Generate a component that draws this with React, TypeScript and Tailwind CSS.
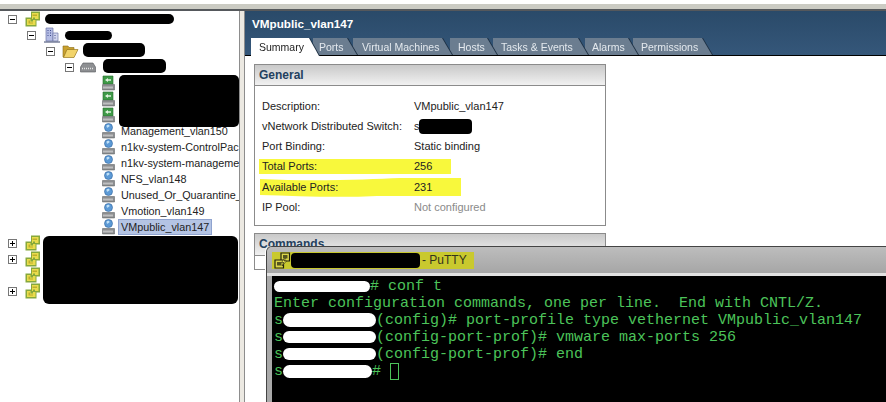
const UI_FONT = { fontFamily: '"Liberation Sans", Arial, sans-serif' }

function Toggle({ open }: { open: boolean }) {
  return (
    <span className="relative flex h-[9px] w-[9px] shrink-0 items-center justify-center border border-[#777] bg-white">
      <span className="h-px w-[5px] bg-black" />
      {!open && <span className="absolute h-[5px] w-px bg-black" />}
    </span>
  )
}

function VCenterIcon() {
  return (
    <svg width="16" height="16" viewBox="0 0 16 16" className="shrink-0">
      <path d="M6 .5h9v9h-3.500v6H.5v-9H6z" fill="#86a83c" />
      <path d="M7 2h6.500v6H10V6.500H8V9h2.500v5H2V8h3.500v2.500H8V8H7z" fill="#e9dc4c" />
      <path d="M7.500 3.500h4.500v1.500H7.500zM3.500 9.500h1.500v2h3v1h-4.500z" fill="#bfae2c" />
    </svg>
  )
}

function DatacenterIcon() {
  return (
    <svg width="16" height="16" viewBox="0 0 16 16" className="shrink-0">
      <path d="M2 1h7v13H2z" fill="#b4bce4" stroke="#6f76a8" strokeWidth="0.7" />
      <path d="M9 6h5v8H9z" fill="#d3d7ee" stroke="#6f76a8" strokeWidth="0.7" />
      <path d="M3.500 3h1v1h-1zM6 3h1v1H6zM3.500 5.500h1v1h-1zM6 5.500h1v1H6zM3.500 8h1v1h-1zM6 8h1v1H6zM10.500 8h1v1h-1zM10.500 10.500h1v1h-1z" fill="#3f4a8c" />
      <path d="M0 15h16" stroke="#35406a" strokeWidth="1" />
    </svg>
  )
}

function FolderIcon() {
  return (
    <svg width="17" height="16" viewBox="0 0 17 16" className="shrink-0">
      <path d="M1 3h5l1 1.500h5V7H5L2 14H1z" fill="#c9a12f" stroke="#8a6b18" strokeWidth="0.6" />
      <path d="M5 6.500h11L12 14.500H1.500z" fill="#f2d46b" stroke="#9a7a20" strokeWidth="0.7" />
    </svg>
  )
}

function SwitchIcon() {
  return (
    <svg width="16" height="11" viewBox="0 0 16 11" className="shrink-0">
      <path d="M3 1h10l2.500 4v5H.5V5z" fill="#8d8f92" stroke="#55585c" strokeWidth="0.6" />
      <path d="M2 6.500h12" stroke="#e4e4e4" strokeWidth="1.600" strokeDasharray="1 1" />
    </svg>
  )
}

function PortStrip() {
  return (
    <>
      <path d="M.5 9.500h12V15H.5z" fill="#8b8d8f" stroke="#55585a" strokeWidth="0.5" />
      <path d="M1.500 12.500h10" stroke="#f0f0f0" strokeWidth="1.800" strokeDasharray="1 1" />
    </>
  )
}

function UplinkIcon() {
  return (
    <svg width="13" height="16" viewBox="0 0 13 16" className="shrink-0">
      <path d="M1 1h10v8H1z" fill="#3f9a48" stroke="#256b2c" strokeWidth="0.6" />
      <path d="M3 5l3-2v1.300h3v1.400H6V7z" fill="#e2f3df" />
      <PortStrip />
    </svg>
  )
}

function PortGroupIcon() {
  return (
    <svg width="13" height="16" viewBox="0 0 13 16" className="shrink-0">
      <circle cx="6.500" cy="4.500" r="4" fill="#5c9ad6" stroke="#2f639c" strokeWidth="0.6" />
      <path d="M4.500 2.500c1-1 2.500-.9 3 0s-1 1.500-1.500 2-1.500.2-1.500-2z" fill="#bfe0f7" />
      <PortStrip />
    </svg>
  )
}

function PuttyIcon() {
  return (
    <svg width="17" height="17" viewBox="0 0 17 17" className="shrink-0">
      <path d="M7 1h8.500v8H7z" fill="#dcd64a" stroke="#22220f" strokeWidth="1.200" />
      <path d="M9 3h4.500v3.500H9z" fill="#55551f" />
      <path d="M1 8h8.500v8H1z" fill="#dcd64a" stroke="#22220f" strokeWidth="1.200" />
      <path d="M3 10h4.500v3.500H3z" fill="#55551f" />
      <path d="M10.500 6.500L7.500 10.500h2.300L8 14l4.500-5H10l1.500-2.500z" fill="#f6ee5a" stroke="#22220f" strokeWidth="0.6" />
    </svg>
  )
}

function TreeRow({ indent, children }: { indent: string; children: React.ReactNode }) {
  return <div className={`flex h-4 items-center ${indent}`}>{children}</div>
}

const UPLINKS = [0, 1, 2]
const PORT_GROUPS = [
  'Management_vlan150',
  'n1kv-system-ControlPac',
  'n1kv-system-manageme',
  'NFS_vlan148',
  'Unused_Or_Quarantine_',
  'Vmotion_vlan149',
]
const HOSTS = [true, true, false, true]

function Tree() {
  return (
    <div className="relative w-[239px] shrink-0 overflow-hidden bg-white text-[10.800px] leading-4 text-[#222]">
      <TreeRow indent="pl-2 gap-2">
        <Toggle open />
        <VCenterIcon />
      </TreeRow>
      <TreeRow indent="pl-[27px] gap-2">
        <Toggle open />
        <DatacenterIcon />
      </TreeRow>
      <TreeRow indent="pl-[46px] gap-[7px]">
        <Toggle open />
        <FolderIcon />
      </TreeRow>
      <TreeRow indent="pl-[65px] gap-[6px]">
        <Toggle open />
        <SwitchIcon />
      </TreeRow>
      {UPLINKS.map(i => (
        <TreeRow key={i} indent="pl-[102px]">
          <UplinkIcon />
        </TreeRow>
      ))}
      {PORT_GROUPS.map(name => (
        <TreeRow key={name} indent="pl-[102px] gap-[6px]">
          <PortGroupIcon />
          <span className="whitespace-nowrap">{name}</span>
        </TreeRow>
      ))}
      <TreeRow indent="pl-[102px] gap-[3px]">
        <PortGroupIcon />
        <span className="whitespace-nowrap border border-[#8fa3cf] bg-[#b4c4e4] px-[2px] leading-[14px]">VMpublic_vlan147</span>
      </TreeRow>
      {HOSTS.map((expandable, i) => (
        <TreeRow key={i} indent="pl-2 gap-2">
          {expandable ? <Toggle open={false} /> : <span className="w-[9px] shrink-0" />}
          <VCenterIcon />
        </TreeRow>
      ))}

      {/* redactions */}
      <div className="absolute left-[45px] top-[3px] h-[10px] w-[129px] rounded-full bg-black" />
      <div className="absolute left-[65px] top-[20px] h-[9px] w-[47px] rounded-full bg-black" />
      <div className="absolute left-[83px] top-[32px] h-[14px] w-[62px] rounded-[5px] bg-black" />
      <div className="absolute left-[103px] top-[48px] h-[14px] w-[63px] rounded-[5px] bg-black" />
      <div className="absolute left-[119px] top-[64px] h-[52px] w-[120px] rounded-[5px] bg-black" />
      <div className="absolute left-[43px] top-[225px] h-[68px] w-[195px] rounded-[6px] bg-black" />
    </div>
  )
}

const TABS = [
  { label: 'Summary', wrap: 'w-[68px] h-[18px] -mb-px z-30', cls: 'pl-2 bg-white text-[#222]' },
  { label: 'Ports', wrap: 'w-[44px] h-[17px] -ml-[6px] z-20', cls: 'pl-[6px] bg-[#6b7d90] text-[#e4e9ee]' },
  { label: 'Virtual Machines', wrap: 'w-[99px] h-[17px] -ml-1 z-[19]', cls: 'pl-[9px] bg-[#6b7d90] text-[#e4e9ee]' },
  { label: 'Hosts', wrap: 'w-[47px] h-[17px] -ml-[2px] z-[18]', cls: 'pl-2 bg-[#6b7d90] text-[#e4e9ee]' },
  { label: 'Tasks & Events', wrap: 'w-[95px] h-[17px] -ml-1 z-[17]', cls: 'pl-2 bg-[#6b7d90] text-[#e4e9ee]' },
  { label: 'Alarms', wrap: 'w-[53px] h-[17px] -ml-[3px] z-[16]', cls: 'pl-[7px] bg-[#6b7d90] text-[#e4e9ee]' },
  { label: 'Permissions', wrap: 'w-[79px] h-[17px] -ml-[5px] z-[15]', cls: 'pl-2 bg-[#6b7d90] text-[#e4e9ee]' },
]

function InfoRow({ label, children }: { label: string; children: React.ReactNode }) {
  return (
    <div className="relative flex h-[20.200px] items-center pl-[7px]">
      <span className="w-[152px] shrink-0">{label}</span>
      {children}
    </div>
  )
}

function Summary() {
  return (
    <div className="flex min-w-0 flex-1 flex-col bg-white">
      <div className="flex h-[45px] flex-col justify-between border-b border-black bg-gradient-to-b from-[#2a4a69] to-[#35577a]">
        <div className="pl-[7px] pt-[5px] text-[11.700px] font-bold leading-4 text-white">VMpublic_vlan147</div>
        <div className="flex pl-[6px]">
          {TABS.map(t => (
            <div key={t.label} className={`relative shrink-0 drop-shadow-[1px_0_0_#1c2f42] ${t.wrap}`}>
              <div className={`h-full whitespace-nowrap pt-[3px] text-[10.500px] leading-[13px] [clip-path:polygon(0_0,calc(100%-10px)_0,100%_100%,0_100%)] ${t.cls}`}>
                {t.label}
              </div>
            </div>
          ))}
        </div>
      </div>

      <div className="pl-[9px] pt-2 text-[11px] text-[#222]">
        <div className="relative h-[162px] w-[352px] border border-[#8b8b8b]">
          <div className="h-[21px] border-b border-[#8b8b8b] bg-gradient-to-b from-[#c9c9c9] to-[#f1f1f1] pl-1 text-[12px] font-bold leading-[20px] text-[#24415f]">General</div>
          <svg width="352" height="50" viewBox="0 0 352 50" className="absolute left-0 top-[92px]">
            <path d="M4 2h192v15H4z" fill="#f8f83c" />
            <path d="M5 22c60 3 110 0 140-1h61v18h-84c-40 2-80 0-117-1z" fill="#f8f83c" />
          </svg>
          <div className="relative pt-[10px]">
            <InfoRow label="Description:"><span>VMpublic_vlan147</span></InfoRow>
            <InfoRow label="vNetwork Distributed Switch:">
              <span>s</span>
              <span className="-ml-px h-[15px] w-[53px] rounded-[4px] bg-black" />
            </InfoRow>
            <InfoRow label="Port Binding:"><span>Static binding</span></InfoRow>
            <InfoRow label="Total Ports:"><span>256</span></InfoRow>
            <InfoRow label="Available Ports:"><span>231</span></InfoRow>
            <InfoRow label="IP Pool:"><span className="text-[#8a8a8a]">Not configured</span></InfoRow>
          </div>
        </div>

        <div className="mt-[7px] w-[352px] border-x border-t border-[#8b8b8b]">
          <div className="h-[22px] border-b border-[#8b8b8b] bg-gradient-to-b from-[#c9c9c9] to-[#f1f1f1] pl-1 text-[12px] font-bold leading-[20px] text-[#24415f]">Commands</div>
          <div className="h-[14px] w-[14px] border-r border-b border-[#8b8b8b]" />
        </div>
      </div>
    </div>
  )
}

function Blank({ w, h }: { w: string; h: string }) {
  return <span className={`inline-block rounded-full bg-white align-middle ${w} ${h}`} />
}

function Putty() {
  return (
    <div className="absolute bottom-0 left-[266px] right-0 top-[246px] flex flex-col overflow-hidden rounded-tl-[6px] border-t border-l border-[#444] bg-[#a9a9a9] shadow-[-1px_0_0_#fff]">
      <div className="flex h-[29px] shrink-0 items-center border-b-[3px] border-[#e2e2e2] bg-gradient-to-b from-[#bdbdbd] to-[#a6a6a6] pl-[5px]">
        <div className="flex h-[17px] w-[202px] items-center bg-[#c9c92e] pl-[2px] text-[12px] text-[#33331c]">
          <PuttyIcon />
          <span className="h-[15px] w-[129px] rounded-[4px] bg-black" />
          <span className="ml-[2px]">- PuTTY</span>
        </div>
      </div>
      <div className="ml-[5px] min-h-0 flex-1 whitespace-pre bg-black pl-[2px] pt-[2px] font-['Liberation_Mono',monospace] text-[15px] leading-[17px] text-[#4cc45a]">
        <div><Blank w="w-[96px]" h="h-[11px]" /># conf t</div>
        <div>Enter configuration commands, one per line.  End with CNTL/Z.</div>
        <div>s<Blank w="w-[93px]" h="h-[14px]" />(config)# port-profile type vethernet VMpublic_vlan147</div>
        <div>s<Blank w="w-[93px]" h="h-[12px]" />(config-port-prof)# vmware max-ports 256</div>
        <div>s<Blank w="w-[93px]" h="h-[12px]" />(config-port-prof)# end</div>
        <div>s<Blank w="w-[89px]" h="h-[13px]" /># <span className="inline-block h-[17px] w-[9px] border border-[#4cc45a] align-top" /></div>
      </div>
    </div>
  )
}

export default function App() {
  return (
    <div className="relative flex h-[402px] w-[886px] flex-col overflow-hidden bg-white" style={UI_FONT}>
      <div className="h-[11px] shrink-0 border-b-2 border-[#55585c] bg-white">
        <div className="mt-1 h-[5px] bg-[#cbcbc3]" />
      </div>
      <div className="flex min-h-0 flex-1">
        <Tree />
        <div className="w-[6px] shrink-0 border-x border-[#8d8d8d] bg-[#ece9e2]" />
        <Summary />
      </div>
      <Putty />
    </div>
  )
}
